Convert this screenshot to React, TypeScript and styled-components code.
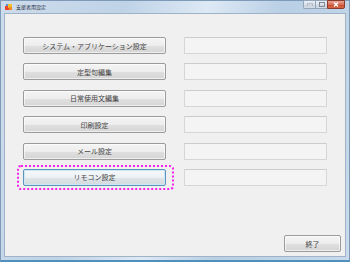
import React from "react";
import styled, { createGlobalStyle, css } from "styled-components";

const GlobalStyle = createGlobalStyle`
  html, body {
    margin: 0;
    padding: 0;
    background: #ffffff;
  }
  #root {
    width: 350px;
    height: 262px;
  }
`;

const rows = [
  "システム・アプリケーション設定",
  "定型句編集",
  "日常使用文編集",
  "印刷設定",
  "メール設定",
  "リモコン設定",
];

function App() {
  return (
    <>
      <GlobalStyle />
      <Window>
        <TitleBar>
          <AppIcon viewBox="0 0 8 8">
            <rect x="0" y="3" width="4" height="4" fill="#e8432c" />
            <rect x="3" y="1" width="4" height="4" fill="#f6c02c" />
            <rect x="4" y="4" width="3" height="3" fill="#f08a24" />
            <rect x="1" y="1" width="2" height="2" fill="#5a8fd8" />
          </AppIcon>
          <Title>支援者用設定</Title>
          <Controls>
            <CaptionButton>
              <svg width="6" height="3" viewBox="0 0 6 3">
                <rect x="0" y="1" width="6" height="2" fill="#ffffff" stroke="#6a7582" strokeWidth="0.6" />
              </svg>
            </CaptionButton>
            <CaptionButton>
              <svg width="6" height="5" viewBox="0 0 6 5">
                <rect x="0.5" y="0.5" width="5" height="4" fill="none" stroke="#6a7582" strokeWidth="0.8" />
              </svg>
            </CaptionButton>
            <CloseButton>
              <svg width="6" height="5" viewBox="0 0 6 5">
                <path d="M1 0.5 L5 4.5 M5 0.5 L1 4.5" stroke="#ffffff" strokeWidth="1.4" />
              </svg>
            </CloseButton>
          </Controls>
        </TitleBar>
        <Client>
          <Rows>
            {rows.map((label, i) => {
              const isDefault = i === rows.length - 1;
              return (
                <Row key={label}>
                  <Highlight $on={isDefault}>
                    <PushButton $default={isDefault}>{label}</PushButton>
                  </Highlight>
                  <TextField />
                </Row>
              );
            })}
          </Rows>
          <Footer>
            <ExitButton>終了</ExitButton>
          </Footer>
        </Client>
      </Window>
    </>
  );
}

const Window = styled.div`
  box-sizing: border-box;
  width: 350px;
  height: 262px;
  display: flex;
  flex-direction: column;
  padding: 0 3px 3px 3px;
  border: 1px solid #7d9bb8;
  border-bottom: 2px solid #4f90bd;
  background: linear-gradient(
    105deg,
    #cddcec 0%,
    #bfd3e7 30%,
    #dde9f5 50%,
    #b9cfe5 68%,
    #c8daec 100%
  );
`;

const TitleBar = styled.div`
  height: 12px;
  display: flex;
  align-items: center;
  gap: 3px;
`;

const AppIcon = styled.svg`
  width: 8px;
  height: 8px;
  margin-left: 1px;
`;

const Title = styled.div`
  font-family: "Noto Sans CJK JP", sans-serif;
  font-size: 5px;
  line-height: 6px;
  color: #1e2a38;
  flex: 1;
`;

const Controls = styled.div`
  display: flex;
  align-self: flex-start;
  margin-top: -1px;
  margin-right: 1px;
`;

const CaptionButton = styled.div`
  box-sizing: border-box;
  width: 12px;
  height: 9px;
  display: flex;
  align-items: center;
  justify-content: center;
  border: 1px solid #94a5b8;
  border-right: none;
  border-radius: 0 0 0 2px;
  background: linear-gradient(#e9eff6 0%, #d8e1eb 50%, #c8d3df 51%, #d3dde8 100%);

  & + & {
    border-radius: 0;
  }
`;

const CloseButton = styled.div`
  box-sizing: border-box;
  width: 18px;
  height: 9px;
  display: flex;
  align-items: center;
  justify-content: center;
  border: 1px solid #8a3a2e;
  border-radius: 0 0 2px 0;
  background: linear-gradient(#eaa695 0%, #d86e57 50%, #c7482f 51%, #d86a42 100%);
`;

const Client = styled.div`
  flex: 1;
  display: flex;
  flex-direction: column;
  background: #f0f0f0;
  border: 1px solid #9fb2c6;
  padding: 23px 4px 4px 18px;
`;

const Rows = styled.div`
  display: flex;
  flex-direction: column;
  gap: 9.4px;
`;

const Row = styled.div`
  display: flex;
  gap: 18px;
`;

const Highlight = styled.div<{ $on: boolean }>`
  position: relative;
  display: flex;

  ${(p) =>
    p.$on &&
    css`
      &::after {
        content: "";
        position: absolute;
        left: -6px;
        right: -8px;
        top: -4px;
        bottom: -4px;
        border: 2px dotted #f322ea;
        border-radius: 4px;
        pointer-events: none;
      }
    `}
`;

const buttonBase = css`
  box-sizing: border-box;
  display: flex;
  align-items: center;
  justify-content: center;
  font-family: "Noto Sans CJK JP", sans-serif;
  font-size: 7px;
  color: #444444;
  border: 1px solid #9b9b9b;
  border-radius: 2px;
  background: linear-gradient(#f4f4f4 0%, #ededed 50%, #e0e0e0 51%, #d5d5d5 100%);
  box-shadow: inset 0 0 0 1px rgba(255, 255, 255, 0.6);
`;

const PushButton = styled.div<{ $default: boolean }>`
  ${buttonBase}
  width: 143px;
  height: 17px;

  ${(p) =>
    p.$default &&
    css`
      border-color: #5d93bd;
      box-shadow: inset 0 0 0 1px #cce8f6;
      background: linear-gradient(#f5f8fa 0%, #ecf1f4 50%, #dfe5e9 51%, #d4dbdf 100%);
    `}
`;

const TextField = styled.div`
  box-sizing: border-box;
  width: 143px;
  height: 17px;
  background: #f4f4f4;
  border: 1px solid #d6d6d6;
  border-top-color: #cccccc;
  border-radius: 1px;
`;

const Footer = styled.div`
  margin-top: auto;
  display: flex;
  justify-content: flex-end;
`;

const ExitButton = styled.div`
  ${buttonBase}
  width: 57px;
  height: 17px;
`;

export default App;
